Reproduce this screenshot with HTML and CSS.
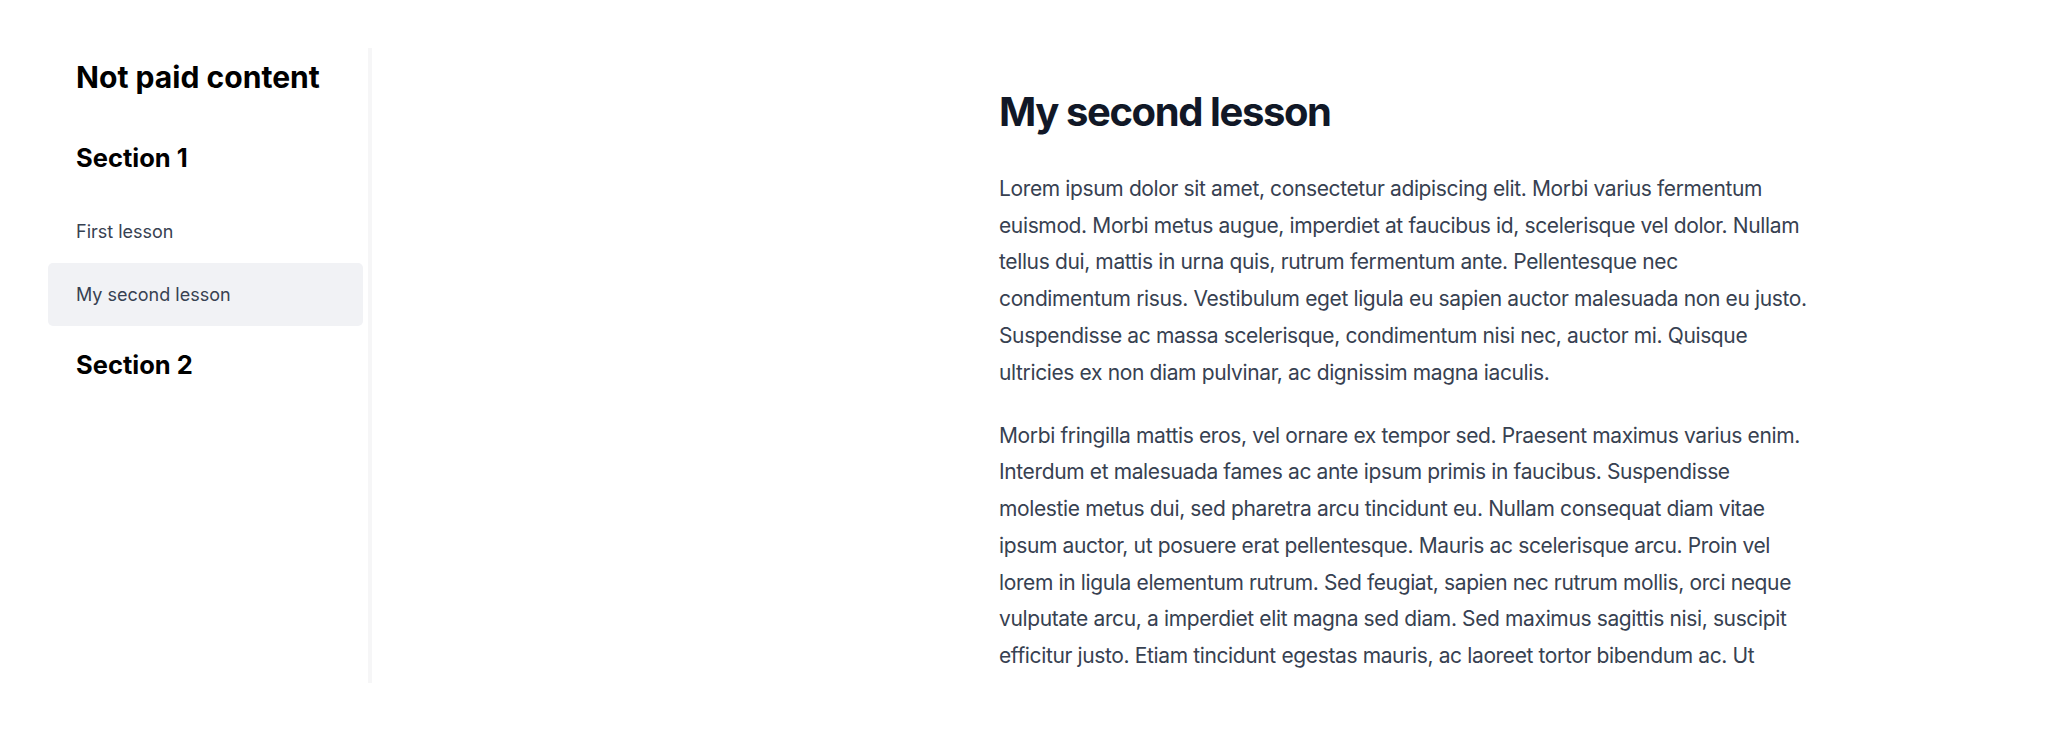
FILE: index.html
```html
<!DOCTYPE html>
<html lang="en">
<head>
<meta charset="utf-8">
<title>My second lesson</title>
<link rel="stylesheet" href="styles.css">
</head>
<body>
<div class="page">
  <aside class="sidebar">
    <h2 class="course-title">Not paid content</h2>
    <h3 class="section-title first">Section 1</h3>
    <nav class="lessons">
      <a class="lesson" href="#">First lesson</a>
      <a class="lesson active" href="#">My second lesson</a>
    </nav>
    <h3 class="section-title">Section 2</h3>
  </aside>
  <main class="main">
    <article class="prose">
      <h1>My second lesson</h1>
      <p>Lorem ipsum dolor sit amet, consectetur adipiscing elit. Morbi varius fermentum euismod. Morbi metus augue, imperdiet at faucibus id, scelerisque vel dolor. Nullam tellus dui, mattis in urna quis, rutrum fermentum ante. Pellentesque nec condimentum risus. Vestibulum eget ligula eu sapien auctor malesuada non eu justo. Suspendisse ac massa scelerisque, condimentum nisi nec, auctor mi. Quisque ultricies ex non diam pulvinar, ac dignissim magna iaculis.</p>
      <p>Morbi fringilla mattis eros, vel ornare ex tempor sed. Praesent maximus varius enim. Interdum et malesuada fames ac ante ipsum primis in faucibus. Suspendisse molestie metus dui, sed pharetra arcu tincidunt eu. Nullam consequat diam vitae ipsum auctor, ut posuere erat pellentesque. Mauris ac scelerisque arcu. Proin vel lorem in ligula elementum rutrum. Sed feugiat, sapien nec rutrum mollis, orci neque vulputate arcu, a imperdiet elit magna sed diam. Sed maximus sagittis nisi, suscipit efficitur justo. Etiam tincidunt egestas mauris, ac laoreet tortor bibendum ac. Ut</p>
    </article>
  </main>
</div>
</body>
</html>
```
FILE: styles.css
```css
* { box-sizing: border-box; }
html, body { margin: 0; padding: 0; background: #ffffff; }
body {
  font-family: Inter, "Noto Sans", "Liberation Sans", sans-serif;
  height: 731px;
  overflow: hidden;
}
.page {
  display: flex;
  align-items: flex-start;
  height: 683px;
  padding: 48px 0 0 48px;
}
.sidebar {
  width: 324px;
  height: 635px;
  flex: none;
  padding: 11px 5px 0 0;
  border-right: 4px solid #f6f6f7;
}
.course-title {
  margin: 0;
  padding-left: 28px;
  font-size: 30.1px;
  line-height: 36px;
  font-weight: 700;
  color: #000000;
}
.section-title {
  margin: 0;
  padding-left: 28px;
  font-size: 25.5px;
  line-height: 32px;
  font-weight: 700;
  color: #000000;
}
.section-title.first { margin-top: 47px; }
.lessons {
  display: flex;
  flex-direction: column;
  margin: 25.5px 0 23px;
}
.lesson {
  display: block;
  padding: 17px 28px;
  font-size: 18px;
  line-height: 29px;
  color: #374151;
  text-decoration: none;
  border-radius: 5px;
}
.lesson.active { background: #f1f2f5; }
.main {
  flex: 1;
  height: 635px;
  overflow: hidden;
  padding: 42px 0 0 627px;
}
.prose {
  max-width: 812px;
  color: #374151;
  font-size: 21px;
  line-height: 36.75px;
  letter-spacing: -0.37px;
}
.prose h1 {
  margin: 0 0 36.5px;
  font-size: 40px;
  line-height: 44.4px;
  font-weight: 700;
  letter-spacing: -1.4px;
  color: #111827;
}
.prose p { margin: 0 0 26.25px; }
```
